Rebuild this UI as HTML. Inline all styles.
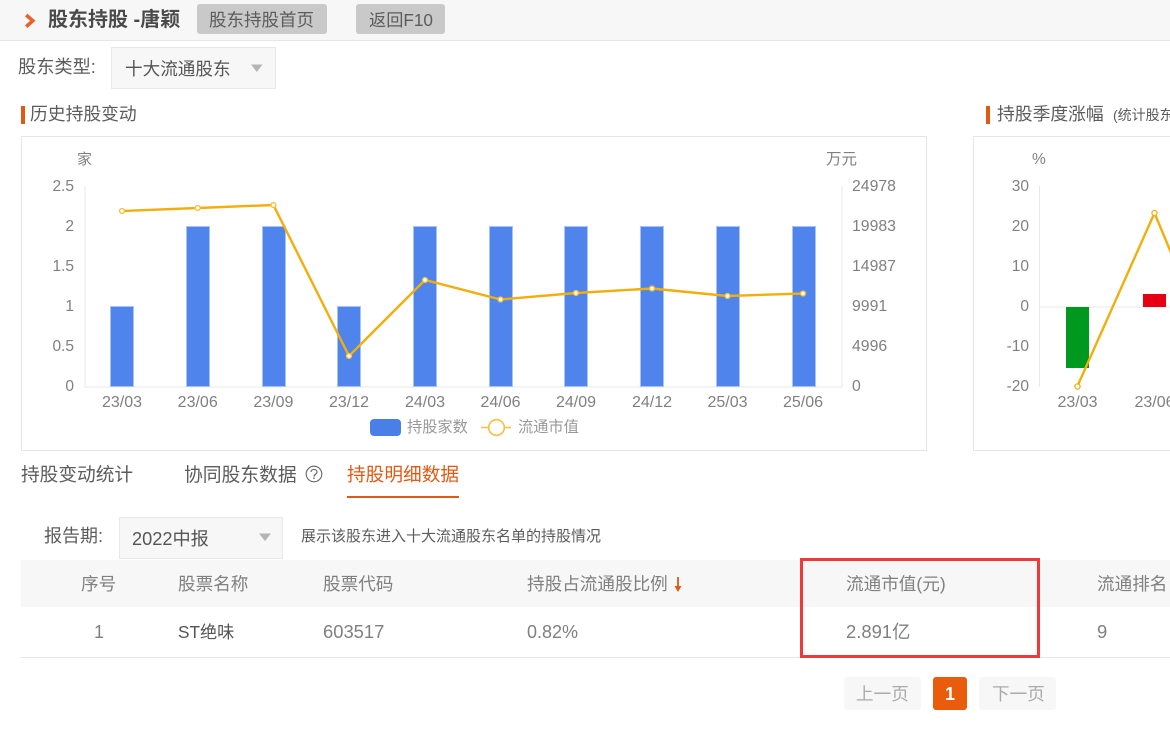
<!DOCTYPE html>
<html lang="zh">
<head>
<meta charset="utf-8">
<style>
html,body{margin:0;padding:0;background:#fff;}
body{width:1170px;height:737px;overflow:hidden;position:relative;font-family:"Liberation Sans","Noto Sans CJK SC",sans-serif;color:#555;}
.t{position:absolute;white-space:nowrap;line-height:24px;height:24px;}
.b{position:absolute;box-sizing:border-box;}
svg text{font-family:"Liberation Sans","Noto Sans CJK SC",sans-serif;}
</style>
</head>
<body>
<div class="b" style="left:0;top:0;width:1170px;height:41px;background:#f7f7f7;border-bottom:1px solid #e6e6e6"></div>
<svg class="b" style="left:24px;top:12px" width="12" height="17" viewBox="0 0 12 17"><path d="M2.2 3 L8.8 8.8 L2.2 14.6" fill="none" stroke="#e8622a" stroke-width="3.6"/></svg>
<div class="t" style="left:48px;top:8px;font-size:20px;font-weight:bold;color:#4a4a4a">股东持股 -唐颖</div>
<div class="b" style="left:197px;top:4px;width:130px;height:30px;background:#c9c9c9;border-radius:3px"></div>
<div class="t" style="left:209px;top:8px;font-size:17.5px;color:#5c5c5c">股东持股首页</div>
<div class="b" style="left:356px;top:4px;width:89px;height:30px;background:#c9c9c9;border-radius:3px"></div>
<div class="t" style="left:369px;top:8px;font-size:17.2px;color:#5c5c5c">返回F10</div>

<div class="t" style="left:18px;top:55px;font-size:18.2px;color:#5c5c5c">股东类型:</div>
<div class="b" style="left:111px;top:47px;width:165px;height:42px;background:#f7f7f7;border:1px solid #e8e8e8"></div>
<div class="t" style="left:125px;top:57px;font-size:17.6px;color:#555">十大流通股东</div>
<svg class="b" style="left:251px;top:64px" width="12" height="9"><path d="M0 .5H11.5L5.8 8Z" fill="#b5b5b5"/></svg>

<div class="b" style="left:21px;top:106px;width:4px;height:18px;background:#e05a14"></div>
<div class="t" style="left:30px;top:102px;font-size:17.8px;color:#5c5c5c">历史持股变动</div>
<div class="b" style="left:986px;top:106px;width:4px;height:18px;background:#e05a14"></div>
<div class="t" style="left:997px;top:102px;font-size:17.8px;color:#5c5c5c">持股季度涨幅</div>
<div class="t" style="left:1113px;top:103px;font-size:14px;color:#5c5c5c">(统计股东</div>

<svg class="b" style="left:0;top:130px" width="1170" height="330" viewBox="0 130 1170 330">
  <rect x="21.5" y="136.5" width="905" height="314" fill="#fff" stroke="#e6e6e6"/>
  <rect x="973.5" y="136.5" width="260" height="314" fill="#fff" stroke="#e6e6e6"/>
  <g stroke="#e8e8e8" fill="none">
    <path d="M85 186V387H842V186"/>
    <path d="M1039.5 186V387M1039 307H1170"/>
  </g>
  <g fill="#4e84ec" stroke="#a9c3f5" stroke-width="1">
    <rect x="110.5" y="306.5" width="23" height="80"/>
    <rect x="186.5" y="226.5" width="23" height="160"/>
    <rect x="262.5" y="226.5" width="23" height="160"/>
    <rect x="337.5" y="306.5" width="23" height="80"/>
    <rect x="413.5" y="226.5" width="23" height="160"/>
    <rect x="489.5" y="226.5" width="23" height="160"/>
    <rect x="564.5" y="226.5" width="23" height="160"/>
    <rect x="640.5" y="226.5" width="23" height="160"/>
    <rect x="716.5" y="226.5" width="23" height="160"/>
    <rect x="792.5" y="226.5" width="23" height="160"/>
  </g>
  <polyline points="122,211 197.7,208 273.4,205 349,356 425,280 500.5,299.5 576,293 652,288.5 727.5,296 803,293.5" fill="none" stroke="#f2ae0c" stroke-width="2.4"/>
  <g fill="#fff" stroke="#f5c040" stroke-width="1.4">
    <circle cx="122" cy="211" r="2.4"/><circle cx="197.7" cy="208" r="2.4"/><circle cx="273.4" cy="205" r="2.4"/><circle cx="349" cy="356" r="2.4"/><circle cx="425" cy="280" r="2.4"/><circle cx="500.5" cy="299.5" r="2.4"/><circle cx="576" cy="293" r="2.4"/><circle cx="652" cy="288.5" r="2.4"/><circle cx="727.5" cy="296" r="2.4"/><circle cx="803" cy="293.5" r="2.4"/>
  </g>
  <g font-size="15.8" fill="#808080">
    <text x="77" y="164" font-size="15">家</text>
    <text x="826" y="164" font-size="15.5">万元</text>
    <g text-anchor="end" font-size="15.5">
      <text x="74" y="191">2.5</text><text x="74" y="231">2</text><text x="74" y="271">1.5</text><text x="74" y="311">1</text><text x="74" y="351">0.5</text><text x="74" y="391">0</text>
    </g>
    <text x="852" y="191">24978</text><text x="852" y="231">19983</text><text x="852" y="271">14987</text><text x="852" y="311">9991</text><text x="852" y="351">4996</text><text x="852" y="391">0</text>
    <g text-anchor="middle" font-size="16">
      <text x="122" y="407">23/03</text><text x="197.7" y="407">23/06</text><text x="273.4" y="407">23/09</text><text x="349" y="407">23/12</text><text x="425" y="407">24/03</text><text x="500.5" y="407">24/06</text><text x="576" y="407">24/09</text><text x="652" y="407">24/12</text><text x="727.5" y="407">25/03</text><text x="803" y="407">25/06</text>
    </g>
    <text x="1032" y="164" font-size="15.5">%</text>
    <g text-anchor="end" font-size="15.5">
      <text x="1029" y="191">30</text><text x="1029" y="231">20</text><text x="1029" y="271">10</text><text x="1029" y="311">0</text><text x="1029" y="351">-10</text><text x="1029" y="391">-20</text>
    </g>
    <g text-anchor="middle" font-size="16">
      <text x="1077.5" y="407">23/03</text><text x="1154.5" y="407">23/06</text>
    </g>
  </g>
  <rect x="1066" y="307" width="23" height="61" fill="#00991f"/>
  <rect x="1143" y="294" width="23" height="13" fill="#e60012"/>
  <polyline points="1077.5,386 1154.5,213 1172,255" fill="none" stroke="#f2ae0c" stroke-width="2.4"/>
  <g fill="#fff" stroke="#f2ae0c" stroke-width="1.3">
    <circle cx="1077.5" cy="386.5" r="2.6"/><circle cx="1154.5" cy="213" r="2.6"/>
  </g>
  <rect x="370" y="419" width="31" height="17" rx="4" fill="#4a7fe8"/>
  <text x="407" y="432" font-size="15.2" fill="#999">持股家数</text>
  <path d="M481 427.5H511" stroke="#f5c040" stroke-width="1.6"/>
  <circle cx="496.5" cy="427.5" r="7.8" fill="#fff" stroke="#f5c040" stroke-width="1.6"/>
  <text x="518" y="432" font-size="15.2" fill="#999">流通市值</text>
</svg>

<div class="t" style="left:21px;top:463px;font-size:18.7px;color:#5c5c5c">持股变动统计</div>
<div class="t" style="left:184px;top:463px;font-size:18.8px;color:#5c5c5c">协同股东数据</div>
<svg class="b" style="left:305px;top:465px" width="18" height="18" viewBox="0 0 18 18"><circle cx="9" cy="9" r="7.8" fill="none" stroke="#666" stroke-width="1.1"/><path d="M6 7C6 3.6 12 3.6 12 7 12 9.2 9 9 9 11.6" fill="none" stroke="#666" stroke-width="1.2"/><rect x="8.3" y="12.6" width="1.4" height="1.4" fill="#666"/></svg>
<div class="t" style="left:347px;top:463px;font-size:18.7px;color:#e05a14">持股明细数据</div>
<div class="b" style="left:347px;top:496px;width:112px;height:2px;background:#e05a14"></div>

<div class="t" style="left:44px;top:524px;font-size:18px;color:#5c5c5c">报告期:</div>
<div class="b" style="left:119px;top:517px;width:164px;height:42px;background:#f7f7f7;border:1px solid #e8e8e8"></div>
<div class="t" style="left:132px;top:527px;font-size:18.2px;color:#555">2022中报</div>
<svg class="b" style="left:259px;top:533px" width="13" height="9"><path d="M0 .5H12L6 8Z" fill="#b5b5b5"/></svg>
<div class="t" style="left:301px;top:525px;font-size:15px;color:#5c5c5c">展示该股东进入十大流通股东名单的持股情况</div>

<div class="b" style="left:21px;top:560px;width:1149px;height:47px;background:#f7f7f7"></div>
<div class="b" style="left:21px;top:657px;width:1149px;height:1px;background:#e6e6e6"></div>
<div class="t" style="left:81px;top:572px;font-size:17.6px;color:#808080">序号</div>
<div class="t" style="left:178px;top:572px;font-size:17.6px;color:#808080">股票名称</div>
<div class="t" style="left:323px;top:572px;font-size:17.6px;color:#808080">股票代码</div>
<div class="t" style="left:527px;top:572px;font-size:17.6px;color:#808080">持股占流通股比例</div>
<svg class="b" style="left:673px;top:576px" width="10" height="17"><path d="M5 1V11" stroke="#e05a14" stroke-width="1.8"/><path d="M1.5 10H8.5L5 16Z" fill="#e05a14"/></svg>
<div class="t" style="left:846px;top:572px;font-size:17.6px;color:#808080">流通市值(元)</div>
<div class="t" style="left:1097px;top:572px;font-size:17.6px;color:#808080">流通排名</div>

<div class="t" style="left:94px;top:620px;font-size:18px;color:#808080">1</div>
<div class="t" style="left:178px;top:620px;font-size:17.2px;color:#555">ST绝味</div>
<div class="t" style="left:323px;top:620px;font-size:18.4px;color:#808080">603517</div>
<div class="t" style="left:527px;top:620px;font-size:18px;color:#808080">0.82%</div>
<div class="t" style="left:846px;top:620px;font-size:18.4px;color:#808080">2.891亿</div>
<div class="t" style="left:1097px;top:620px;font-size:18.4px;color:#808080">9</div>

<div class="b" style="left:800px;top:558px;width:240px;height:100px;border:3px solid #ee3a3a"></div>

<div class="b" style="left:844px;top:677px;width:77px;height:33px;background:#f7f7f7;border-radius:3px"></div>
<div class="t" style="left:856px;top:682px;font-size:17.6px;color:#aaa">上一页</div>
<div class="b" style="left:933px;top:677px;width:34px;height:33px;background:#e85c0c;border-radius:3px"></div>
<div class="t" style="left:933px;top:682px;width:34px;text-align:center;font-size:18px;font-weight:bold;color:#fff">1</div>
<div class="b" style="left:979px;top:677px;width:77px;height:33px;background:#f7f7f7;border-radius:3px"></div>
<div class="t" style="left:992px;top:682px;font-size:17.6px;color:#aaa">下一页</div>
</body>
</html>
